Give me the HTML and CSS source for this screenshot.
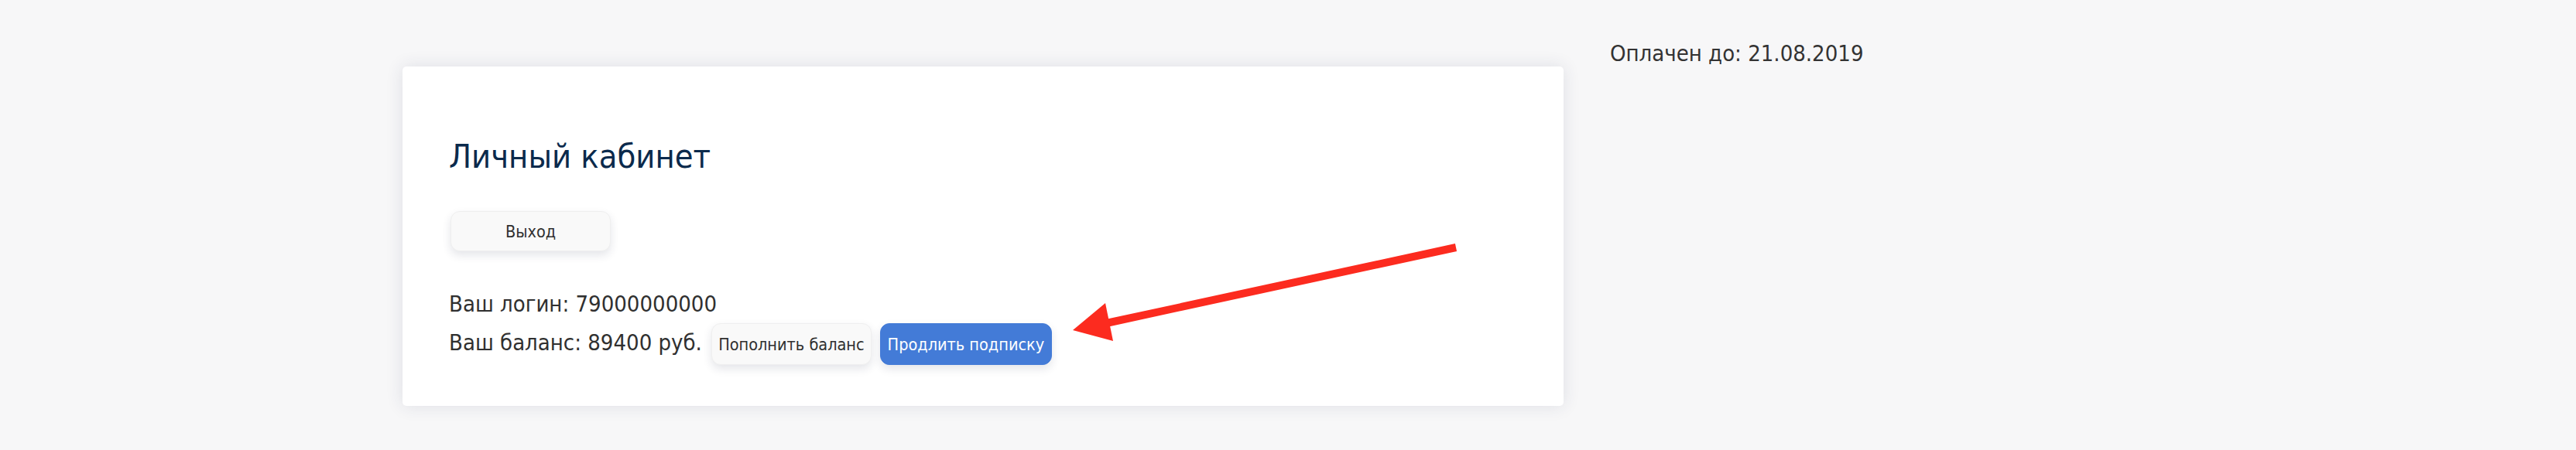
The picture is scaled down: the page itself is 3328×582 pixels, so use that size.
FILE: index.html
```html
<!DOCTYPE html>
<html lang="ru">
<head>
<meta charset="utf-8">
<title>Личный кабинет</title>
<link rel="stylesheet" href="styles.css">
</head>
<body>
<div class="page">
  <main class="card">
    <h1 class="title">Личный кабинет</h1>
    <button class="btn btn-light btn-exit">Выход</button>
    <div class="info">
      <div class="line">Ваш логин: 79000000000</div>
      <div class="line balance">
        <span>Ваш баланс: 89400 руб.</span>
        <button class="btn btn-light btn-topup">Пополнить баланс</button>
        <button class="btn btn-primary btn-renew">Продлить подписку</button>
      </div>
    </div>
  </main>
  <aside class="side">Оплачен до: 21.08.2019</aside>
</div>
<svg class="arrow" width="520" height="150" viewBox="0 0 520 150">
  <line x1="501" y1="10" x2="40" y2="110" stroke="#fc2b1f" stroke-width="10"/>
  <polygon points="6,117 48,82 58,131" fill="#fc2b1f"/>
</svg>
</body>
</html>
```
FILE: styles.css
```css
html, body {
  margin: 0;
  padding: 0;
}
body {
  background: #f7f7f8;
  font-family: "DejaVu Sans Condensed", "DejaVu Sans", sans-serif;
  color: #303030;
  height: 582px;
  overflow: hidden;
  position: relative;
}
.page {
  width: 2288px;
  margin: 0 auto;
  display: flex;
  align-items: flex-start;
  padding-top: 52px;
}
.card {
  width: 1500px;
  box-sizing: border-box;
  margin-top: 34px;
  background: #fff;
  border-radius: 5px;
  box-shadow: 0 0 22px rgba(40, 50, 90, 0.12);
  padding: 90px 60px 53px;
}
.title {
  margin: 0;
  font-size: 43px;
  line-height: 52px;
  font-weight: normal;
  color: #0b2a4c;
}
.btn {
  font-family: inherit;
  font-size: 21.5px;
  border-radius: 12px;
  border: 1px solid #efefef;
  cursor: pointer;
  padding: 0;
  text-align: center;
  box-shadow: 0 5px 12px rgba(30, 40, 70, 0.12);
}
.btn-light {
  background: #f9f9f9;
  color: #303030;
}
.btn-primary {
  background: #437bd7;
  border-color: #437bd7;
  color: #fff;
}
.btn-exit {
  display: block;
  margin-top: 45px;
  width: 207px;
  height: 52px;
  margin-left: 2px;
}
.info {
  margin-top: 47px;
  font-size: 29px;
}
.line {
  line-height: 42px;
}
.balance {
  display: flex;
  align-items: baseline;
  margin-top: 4px;
}
.balance span {
  margin-right: 12px;
}
.balance .btn {
  height: 54px;
  margin-right: 11px;
}
.btn-topup {
  width: 207px;
}
.btn-renew {
  width: 222px;
}
.side {
  margin-left: 60px;
  font-size: 29px;
  color: #333;
}
.arrow {
  position: absolute;
  left: 1380px;
  top: 310px;
}
```
